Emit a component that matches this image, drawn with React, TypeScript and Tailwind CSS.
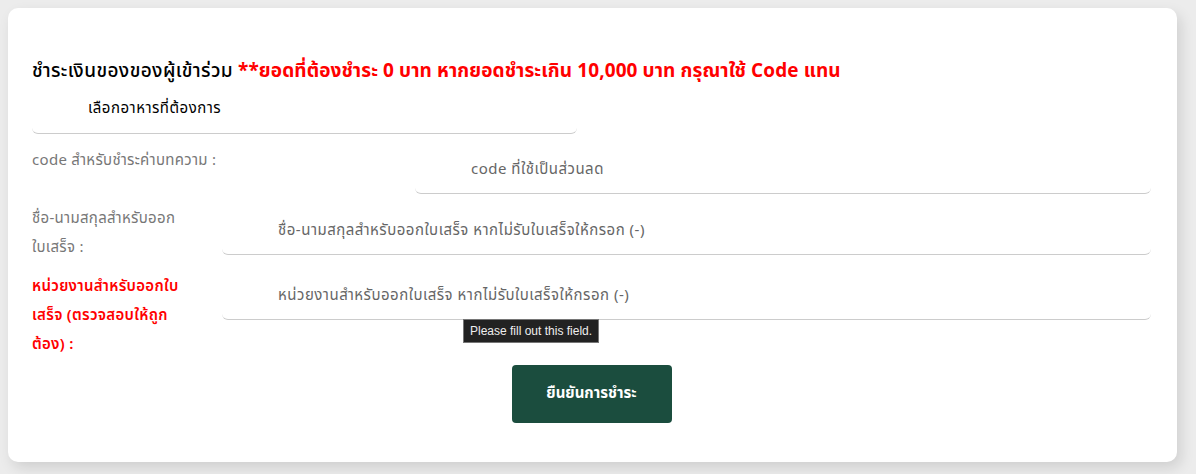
import React from "react";

const font = { fontFamily: '"Noto Sans Thai", "Noto Sans", "Liberation Sans", sans-serif' };

interface FieldRowProps {
    label: React.ReactNode;
    placeholder: string;
    labelWidth: string;
    inputTop?: string;
    red?: boolean;
}

const FieldRow = ({ label, placeholder, labelWidth, inputTop = "mt-[3px]", red }: FieldRowProps) => (
    <div className="flex items-start">
        <label
            className={`${labelWidth} shrink-0 text-[15px] leading-[29px] tracking-[0.3px] ${red ? "pt-[3px] font-semibold text-[#ff0000]" : "text-[#777777]"}`}
        >
            {label}
        </label>
        <div className="relative grow">
            <input
                placeholder={placeholder}
                className={`${inputTop} h-[48px] w-full rounded-md border-b border-[#cccccc] bg-white pl-[56px] text-[15px] tracking-[0.5px] text-[#555555] outline-none placeholder:text-[#666666]`}
                style={font}
            />
        </div>
    </div>
);

export default function App() {
    return (
        <div className="min-h-[474px] bg-[#ececec] p-2" style={font}>
            <div className="h-[454px] w-[1169px] rounded-[10px] bg-white pt-[50px] pr-[26px] pb-[40px] pl-[24px] shadow-[4px_6px_14px_rgba(0,0,0,0.12)]">
                {/* header */}
                <h2 className="text-[19px] leading-[28px] font-medium text-black">
                    <span className="tracking-[0.4px]">ชำระเงินของของผู้เข้าร่วม</span>{" "}
                    <span className="font-bold tracking-[0.1px] text-[#ff0000]">
                        **ยอดที่ต้องชำระ 0 บาท หากยอดชำระเกิน 10,000 บาท กรุณาใช้ Code แทน
                    </span>
                </h2>

                {/* food select */}
                <div className="w-[545px]">
                    <div className="flex h-[48px] items-center rounded-md border-b border-[#cccccc] pl-[56px] text-[15px] tracking-[0.5px] text-black">
                        เลือกอาหารที่ต้องการ
                    </div>
                </div>

                <div className="mt-[12px] flex flex-col">
                    <FieldRow
                        label="code สำหรับชำระค่าบทความ :"
                        placeholder="code ที่ใช้เป็นส่วนลด"
                        labelWidth="w-[383px]"
                        inputTop="mt-0"
                    />
                    <div className="mt-[10px]">
                        <FieldRow
                            label={
                                <>
                                    ชื่อ-นามสกุลสำหรับออก
                                    <br />
                                    ใบเสร็จ :
                                </>
                            }
                            placeholder="ชื่อ-นามสกุลสำหรับออกใบเสร็จ หากไม่รับใบเสร็จให้กรอก (-)"
                            labelWidth="w-[190px]"
                        />
                    </div>
                    <div className="relative mt-[7px]">
                        <FieldRow
                            label={
                                <>
                                    หน่วยงานสำหรับออกใบ
                                    <br />
                                    เสร็จ (ตรวจสอบให้ถูก
                                    <br />
                                    ต้อง) :
                                </>
                            }
                            placeholder="หน่วยงานสำหรับออกใบเสร็จ หากไม่รับใบเสร็จให้กรอก (-)"
                            labelWidth="w-[190px]"
                            red
                        />
                        {/* validation tooltip */}
                        <div
                            className="absolute top-[50px] left-[431px] border border-[#767676] bg-[#222222] px-[6px] py-[3px] text-[12px] leading-[16px] whitespace-nowrap text-[#eeeeee]"
                            style={{ fontFamily: '"Liberation Sans", sans-serif' }}
                        >
                            Please fill out this field.
                        </div>
                    </div>
                </div>

                <div className="mt-[6px] flex justify-center">
                    <button className="h-[58px] w-[160px] rounded-[4px] bg-[#1b4d3e] text-[15px] font-bold text-white">
                        ยืนยันการชำระ
                    </button>
                </div>
            </div>
        </div>
    );
}
